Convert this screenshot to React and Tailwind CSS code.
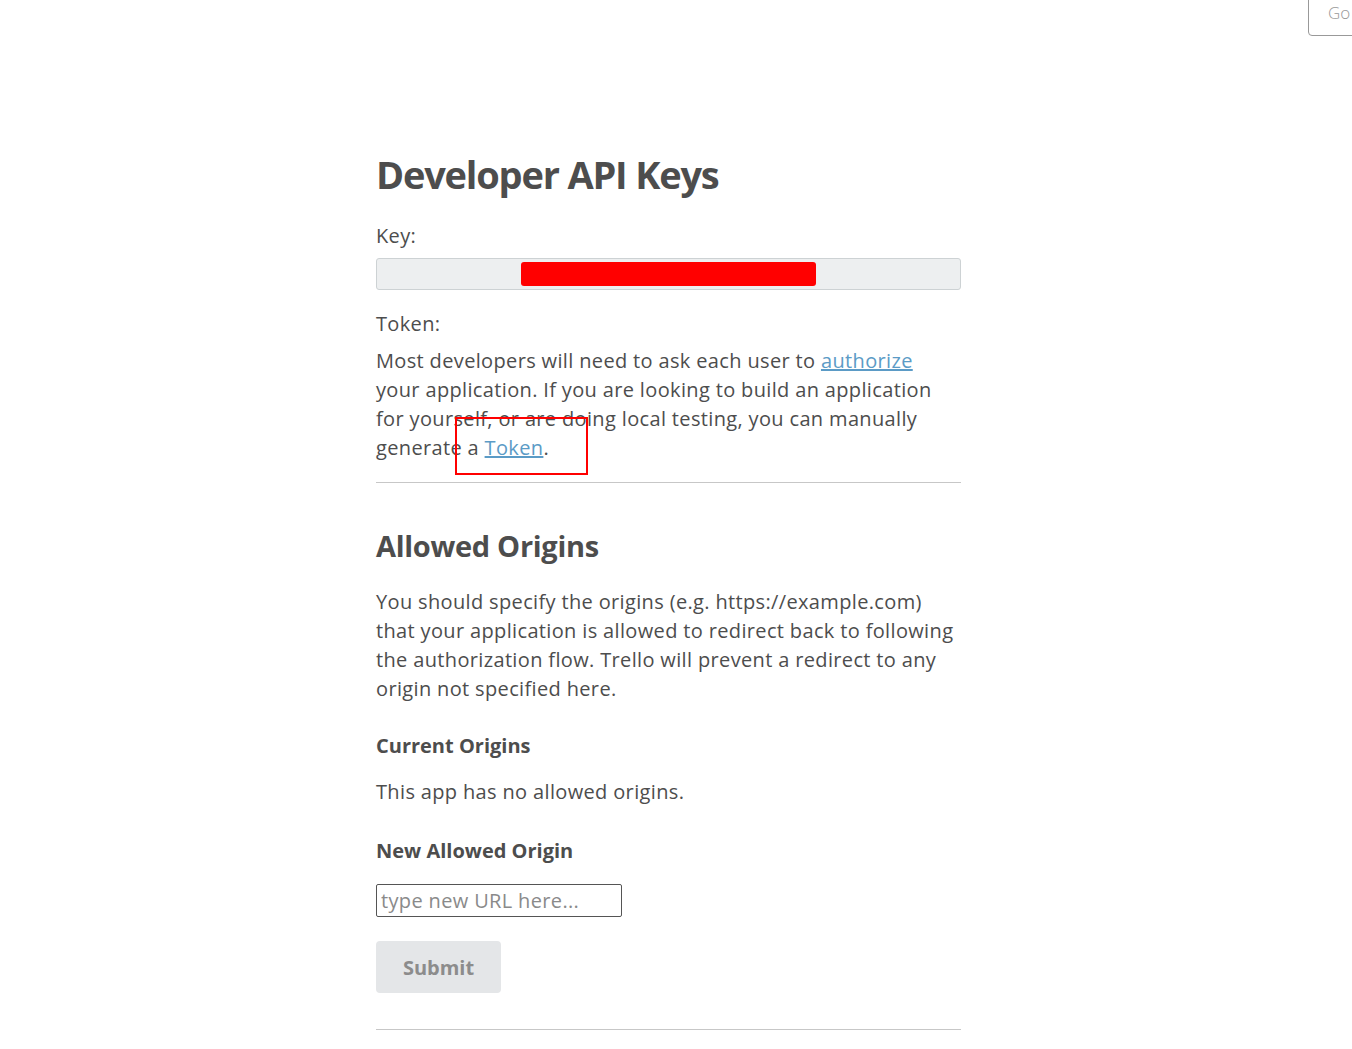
import React from 'react'

const App = () => {
  return (
    <div className="relative min-h-screen bg-white text-[#4d4d4d] font-['Open_Sans',sans-serif]">
      {/* Go button, cut off at the edge */}
      <div className="absolute right-[-20px] top-[-10px] h-[46px] w-[64px] rounded-b-[4px] border border-[#999] pl-[19px] pt-[9px] text-[17px] font-light text-[#999]">
        Go
      </div>

      <div className="flex justify-center pr-[15px]">
        <div className="w-[585px] pt-[149px] text-[20px] leading-[29px] tracking-[0.35px]">
          <h1 className="mb-[22px] text-[38px] font-bold leading-[50px] tracking-[-1.2px]">Developer API Keys</h1>

          <p className="mb-[8px]">Key:</p>
          <div className="mb-[19px] flex h-[32px] items-center rounded-[3px] border border-[#cdd2d4] bg-[#edeff0] pl-[144px]">
            <div className="h-[24px] w-[295px] rounded-[3px] bg-[#ff0000]" />
          </div>

          <p className="mb-[8px]">Token:</p>
          <div className="relative">
            <p>
              Most developers will need to ask each user to{' '}
              <a href="#" className="text-[#5b9bc6] underline">authorize</a>{' '}
              your application. If you are looking to build an application for yourself, or are doing local testing, you can manually generate a{' '}
              <a href="#" className="text-[#5b9bc6] underline">Token</a>.
            </p>
            {/* annotation box over the text */}
            <div className="absolute left-[79px] top-[71px] h-[58px] w-[133px] border-2 border-[#ff0000]" />
          </div>

          <hr className="mt-[20px] border-t border-[#c7c7c7]" />

          <h2 className="mt-[43px] mb-[21px] text-[29px] font-bold leading-[40px] tracking-[-0.3px]">Allowed Origins</h2>
          <p>
            You should specify the origins (e.g. https://example.com) that your application is allowed to redirect back to following the authorization flow. Trello will prevent a redirect to any origin not specified here.
          </p>

          <h3 className="mt-[29px] mb-[17px] text-[20px] font-bold leading-[28px] tracking-normal">Current Origins</h3>
          <p>This app has no allowed origins.</p>

          <h3 className="mt-[31px] mb-[19px] text-[20px] font-bold leading-[28px] tracking-normal">New Allowed Origin</h3>
          <input
            type="text"
            placeholder="type new URL here..."
            className="block h-[33px] w-[246px] rounded-[2px] border border-[#555] px-[4px] text-[20px] placeholder:text-[#8a8a8a]"
          />
          <button className="mt-[24px] block h-[52px] w-[125px] rounded-[4px] bg-[#e4e6e8] text-[20px] font-bold tracking-normal text-[#8c8c8c]">
            Submit
          </button>

          <hr className="mt-[36px] border-t border-[#c7c7c7]" />
        </div>
      </div>
    </div>
  )
}

export default App
